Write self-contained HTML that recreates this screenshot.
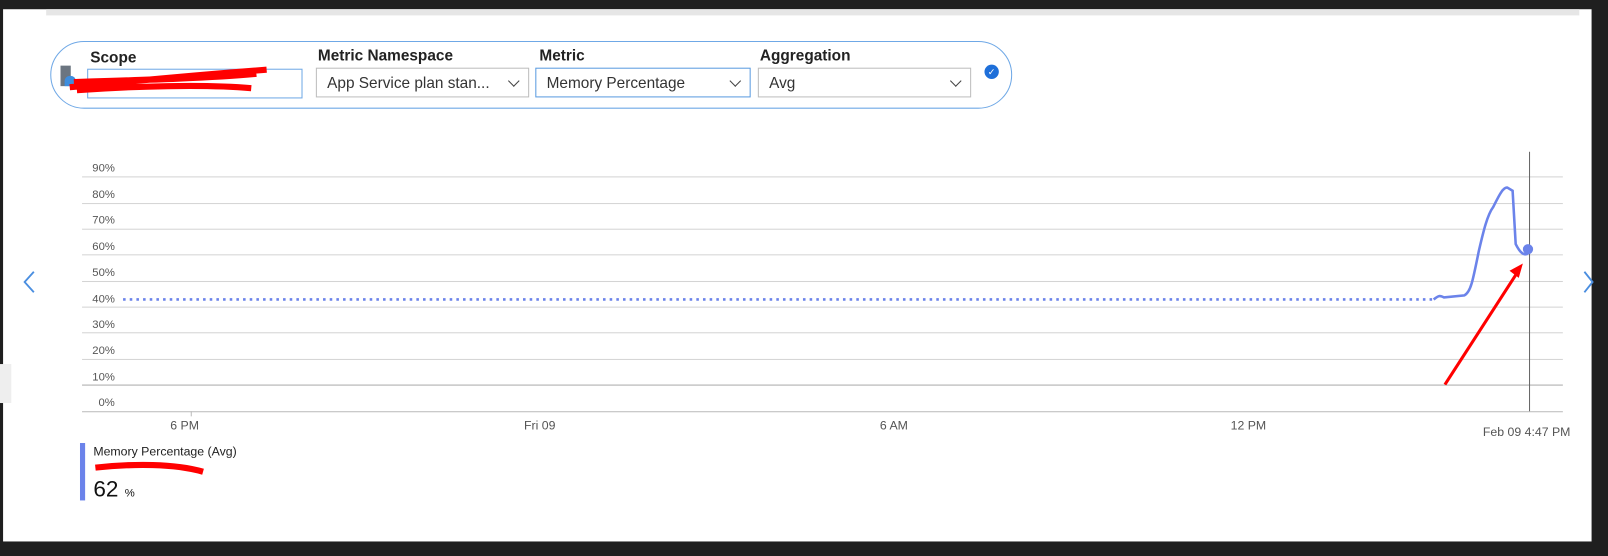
<!DOCTYPE html>
<html><head><meta charset="utf-8"><style>
*{margin:0;padding:0;box-sizing:border-box}
body{width:1608px;height:542px;background:#1f1f1f;position:relative;overflow:hidden;font-family:"Liberation Sans","DejaVu Sans",sans-serif}
#w{position:absolute;left:0;top:0;width:1568px;height:529px;transform:scale(1.0255);transform-origin:0 0}
.panel{position:absolute;left:3px;top:9px;width:1549px;height:519px;background:#fff}
.abs{position:absolute}
.lbl{font-weight:bold;font-size:15px;color:#222}
.box{position:absolute;height:29px;border:1px solid #bdbdbd;background:#fff;font-size:15px;color:#333;padding:6px 10px}
.chev{position:absolute;right:10px;top:8px;width:8px;height:8px;border-right:1.5px solid #444;border-bottom:1.5px solid #444;transform:rotate(45deg)}
.yl{position:absolute;left:94px;font-size:11px;color:#555}
.gl{position:absolute;left:80px;width:1444px;height:1px;background:#d4d4d4}
.xl{position:absolute;top:408px;font-size:12px;color:#555}
</style></head><body><div id="w">
<div class="panel"></div>
<div class="abs" style="left:45px;top:9px;width:1495px;height:6px;background:#e6e6e6"></div>
<div class="abs" style="left:49px;top:40px;width:938px;height:66px;border:1.5px solid #6fa8e6;border-radius:33px"></div>
<div class="abs" style="left:59px;top:64px;width:10px;height:20px;background:#6b7580"></div>
<div class="abs" style="left:63px;top:74px;width:11px;height:10px;background:#3e8ddd;border-radius:5px 5px 0 0"></div>
<div class="abs lbl" style="left:88px;top:48px">Scope</div>
<div class="box" style="left:85px;top:67px;width:210px;border-color:#6fa8e6"></div>
<svg class="abs" style="left:60px;top:60px" width="210" height="35"><path d="M8 25 C60 20 120 14 200 8 M12 20 C80 18 150 16 190 12 M15 28 C70 24 140 22 185 26" stroke="#f00" stroke-width="6" fill="none"/></svg>
<div class="abs lbl" style="left:310px;top:46px">Metric Namespace</div>
<div class="box" style="left:308px;top:66px;width:208px">App Service plan stan...<div class="chev"></div></div>
<div class="abs lbl" style="left:526px;top:46px">Metric</div>
<div class="box" style="left:522px;top:66px;width:210px;border-color:#5a9be0">Memory Percentage<div class="chev"></div></div>
<div class="abs lbl" style="left:741px;top:46px">Aggregation</div>
<div class="box" style="left:739px;top:66px;width:208px">Avg<div class="chev"></div></div>
<div class="abs" style="left:960px;top:63px;width:14px;height:14px;border-radius:50%;background:#1e6fd9;color:#fff;font-size:9px;text-align:center;line-height:14px">✓</div>

<div class="yl" style="top:158px;left:90px">90%</div><div class="gl" style="top:172px"></div>
<div class="yl" style="top:184px;left:90px">80%</div><div class="gl" style="top:198px"></div>
<div class="yl" style="top:209px;left:90px">70%</div><div class="gl" style="top:223px"></div>
<div class="yl" style="top:235px;left:90px">60%</div><div class="gl" style="top:248px"></div>
<div class="yl" style="top:260px;left:90px">50%</div><div class="gl" style="top:274px"></div>
<div class="yl" style="top:286px;left:90px">40%</div><div class="gl" style="top:299px"></div>
<div class="yl" style="top:311px;left:90px">30%</div><div class="gl" style="top:324px"></div>
<div class="yl" style="top:336px;left:90px">20%</div><div class="gl" style="top:350px"></div>
<div class="yl" style="top:362px;left:90px">10%</div><div class="gl" style="top:375px;background:#aaa"></div>
<div class="yl" style="top:387px;left:96px">0%</div><div class="gl" style="top:401px;background:#bbb"></div>
<div class="abs" style="left:1491px;top:148px;width:1px;height:253px;background:#666"></div>
<div class="abs" style="left:186px;top:401px;width:1px;height:5px;background:#bbb"></div>
<div class="xl" style="left:166px">6 PM</div>
<div class="xl" style="left:511px">Fri 09</div>
<div class="xl" style="left:858px">6 AM</div>
<div class="xl" style="left:1200px">12 PM</div>
<div class="xl" style="left:1446px;top:414px">Feb 09 4:47 PM</div>
<svg class="abs" style="left:0;top:0" width="1608" height="542">
<path d="M120 292 H1398" stroke="#6b83ea" stroke-width="2.5" stroke-dasharray="2.5 4" fill="none"/>
<path d="M1398 292 C1403 288 1404 288 1408 290 L1428 288 C1434 285 1436 275 1442 245 C1446 228 1450 210 1456 202 C1462 190 1466 182 1470 183 L1475 186 L1478 238 C1482 246 1486 250 1490 247" stroke="#6b83ea" stroke-width="2.5" fill="none"/>
<circle cx="1490" cy="243" r="5" fill="#6b83ea"/>
<path d="M1409 375 L1482 262" stroke="#f00" stroke-width="3"/>
<path d="M1485 257 L1472 264 L1481 271 Z" fill="#f00"/>
<path d="M33 265 L24 275 L33 285" stroke="#4a8ee0" stroke-width="1.8" fill="none"/>
<path d="M1545 265 L1553 275 L1545 285" stroke="#4a8ee0" stroke-width="1.8" fill="none"/>
</svg>
<div class="abs" style="left:78px;top:432px;width:5px;height:56px;background:#6b83ea"></div>
<div class="abs" style="left:91px;top:433px;font-size:12px;color:#222">Memory Percentage (Avg)</div>
<svg class="abs" style="left:90px;top:446px" width="120" height="20"><path d="M3 10 C40 6 80 6 108 14" stroke="#f00" stroke-width="6" fill="none"/></svg>
<div class="abs" style="left:91px;top:464px;font-size:22px;color:#111">62 <span style="font-size:11px">%</span></div>
<div class="abs" style="left:0;top:355px;width:11px;height:38px;background:#eee"></div>
</div></body></html>
